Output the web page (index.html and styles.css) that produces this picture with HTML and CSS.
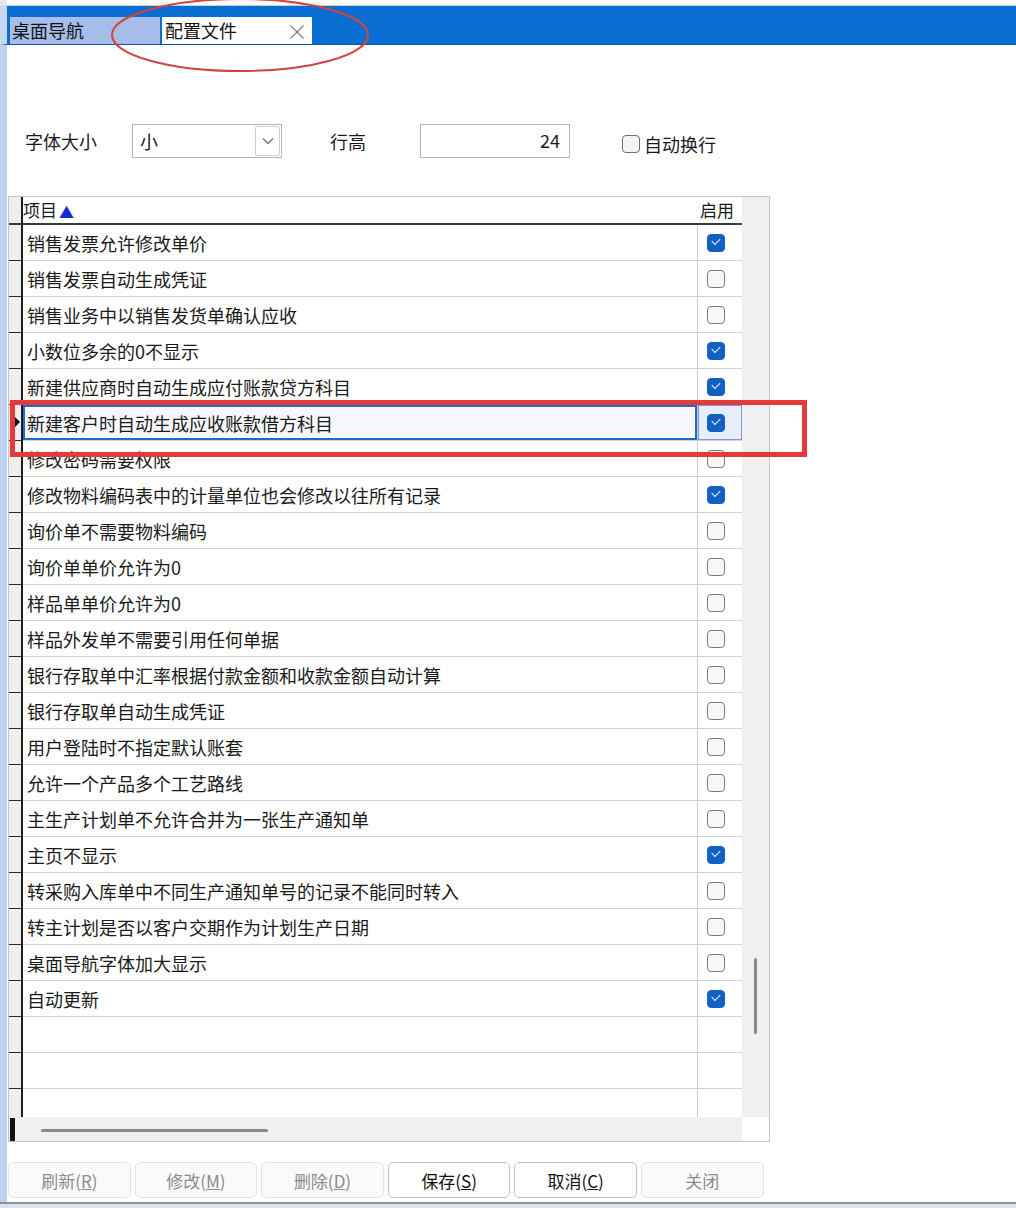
FILE: index.html
```html
<!DOCTYPE html>
<html>
<head>
<meta charset="utf-8">
<link rel="stylesheet" href="styles.css">
</head>
<body>
<div class="page">
  <div class="topline"></div>
  <div class="tabbar">
    <div class="tab tab-nav">桌面导航</div>
    <div class="tab tab-active"><span>配置文件</span><span class="close">×</span></div>
  </div>
  <div class="main">
    <div class="leftedge"></div>
    <div class="content">
      <div class="controls">
        <span class="label lbl-font">字体大小</span>
        <div class="select"><span class="select-val">小</span><span class="select-btn"><svg width="14" height="10" viewBox="0 0 14 10"><path d="M2 2.5 L7 7.5 L12 2.5" fill="none" stroke="#777" stroke-width="1.4"/></svg></span></div>
        <span class="label lbl-row">行高</span>
        <div class="numinput">24</div>
        <span class="chk-wrap"><span class="chkbox"></span><span class="label">自动换行</span></span>
      </div>
      <div class="grid">
        <div class="grid-left">
          <div class="row header">
            <div class="ind"></div>
            <div class="cell-name">项目<span class="sort">▲</span></div>
            <div class="cell-chk head-chk">启用</div>
          </div>
          <div class="gbody">
            <div class="row"><div class="ind"></div><div class="cell-name">销售发票允许修改单价</div><div class="cell-chk"><span class="cb on"></span></div></div>
            <div class="row"><div class="ind"></div><div class="cell-name">销售发票自动生成凭证</div><div class="cell-chk"><span class="cb"></span></div></div>
            <div class="row"><div class="ind"></div><div class="cell-name">销售业务中以销售发货单确认应收</div><div class="cell-chk"><span class="cb"></span></div></div>
            <div class="row"><div class="ind"></div><div class="cell-name">小数位多余的0不显示</div><div class="cell-chk"><span class="cb on"></span></div></div>
            <div class="row"><div class="ind"></div><div class="cell-name">新建供应商时自动生成应付账款贷方科目</div><div class="cell-chk"><span class="cb on"></span></div></div>
            <div class="row selected"><div class="ind"><span class="arrow"></span></div><div class="cell-name">新建客户时自动生成应收账款借方科目</div><div class="cell-chk"><span class="cb on"></span></div></div>
            <div class="row"><div class="ind"></div><div class="cell-name">修改密码需要权限</div><div class="cell-chk"><span class="cb"></span></div></div>
            <div class="row"><div class="ind"></div><div class="cell-name">修改物料编码表中的计量单位也会修改以往所有记录</div><div class="cell-chk"><span class="cb on"></span></div></div>
            <div class="row"><div class="ind"></div><div class="cell-name">询价单不需要物料编码</div><div class="cell-chk"><span class="cb"></span></div></div>
            <div class="row"><div class="ind"></div><div class="cell-name">询价单单价允许为0</div><div class="cell-chk"><span class="cb"></span></div></div>
            <div class="row"><div class="ind"></div><div class="cell-name">样品单单价允许为0</div><div class="cell-chk"><span class="cb"></span></div></div>
            <div class="row"><div class="ind"></div><div class="cell-name">样品外发单不需要引用任何单据</div><div class="cell-chk"><span class="cb"></span></div></div>
            <div class="row"><div class="ind"></div><div class="cell-name">银行存取单中汇率根据付款金额和收款金额自动计算</div><div class="cell-chk"><span class="cb"></span></div></div>
            <div class="row"><div class="ind"></div><div class="cell-name">银行存取单自动生成凭证</div><div class="cell-chk"><span class="cb"></span></div></div>
            <div class="row"><div class="ind"></div><div class="cell-name">用户登陆时不指定默认账套</div><div class="cell-chk"><span class="cb"></span></div></div>
            <div class="row"><div class="ind"></div><div class="cell-name">允许一个产品多个工艺路线</div><div class="cell-chk"><span class="cb"></span></div></div>
            <div class="row"><div class="ind"></div><div class="cell-name">主生产计划单不允许合并为一张生产通知单</div><div class="cell-chk"><span class="cb"></span></div></div>
            <div class="row"><div class="ind"></div><div class="cell-name">主页不显示</div><div class="cell-chk"><span class="cb on"></span></div></div>
            <div class="row"><div class="ind"></div><div class="cell-name">转采购入库单中不同生产通知单号的记录不能同时转入</div><div class="cell-chk"><span class="cb"></span></div></div>
            <div class="row"><div class="ind"></div><div class="cell-name">转主计划是否以客户交期作为计划生产日期</div><div class="cell-chk"><span class="cb"></span></div></div>
            <div class="row"><div class="ind"></div><div class="cell-name">桌面导航字体加大显示</div><div class="cell-chk"><span class="cb"></span></div></div>
            <div class="row"><div class="ind"></div><div class="cell-name">自动更新</div><div class="cell-chk"><span class="cb on"></span></div></div>
            <div class="row"><div class="ind"></div><div class="cell-name"></div><div class="cell-chk"></div></div>
            <div class="row"><div class="ind"></div><div class="cell-name"></div><div class="cell-chk"></div></div>
            <div class="row"><div class="ind"></div><div class="cell-name"></div><div class="cell-chk"></div></div>
          </div>
          <div class="hscroll"><span class="hblock"></span><span class="hthumb"></span></div>
        </div>
        <div class="grid-right">
          <div class="vscroll"><span class="vthumb"></span></div>
          <div class="corner"></div>
        </div>
      </div>
      <div class="buttons">
        <div class="btn disabled">刷新(<u>R</u>)</div>
        <div class="btn disabled">修改(<u>M</u>)</div>
        <div class="btn disabled">删除(<u>D</u>)</div>
        <div class="btn">保存(<u>S</u>)</div>
        <div class="btn">取消(<u>C</u>)</div>
        <div class="btn disabled">关闭</div>
      </div>
    </div>
  </div>
  <div class="bottomline"></div>
  <svg class="ellipse" width="280" height="90" viewBox="0 0 280 90"><ellipse cx="130" cy="37" rx="128" ry="36" fill="none" stroke="#d0463f" stroke-width="2"/></svg>
  <div class="redbox"></div>
</div>
</body>
</html>
```
FILE: styles.css
```css
* { box-sizing: border-box; }
html, body { margin: 0; padding: 0; }
body {
  width: 1016px;
  height: 1208px;
  overflow: hidden;
  background: #fff;
  font-family: "Noto Sans CJK SC", "Noto Sans", sans-serif;
  color: #1a1a1a;
}
.page {
  position: relative;
  width: 1016px;
  height: 1208px;
  display: flex;
  flex-direction: column;
}
.topline {
  height: 6px;
  background: #fff;
  border-bottom: 1px solid #cfcfcf;
  border-left: 7px solid #e4e8ee;
}
.tabbar {
  height: 39px;
  background: #0a6dd2;
  border-left: 7px solid #c5d6ee;
  border-bottom: 1px solid #0a55a8;
  display: flex;
  align-items: flex-end;
  padding-left: 3px;
}
.tab {
  height: 27px;
  width: 150px;
  font-size: 18px;
  line-height: 27px;
  padding-left: 2px;
  color: #111;
}
.tab-nav { background: #a7bde9; }
.tab-active {
  background: #fff;
  margin-left: 2px;
  display: flex;
  justify-content: space-between;
  padding-left: 3px;
  padding-right: 4px;
}
.close { color: #777; font-size: 22px; font-weight: 300; line-height: 26px; }
.main {
  flex: 1;
  display: flex;
}
.leftedge {
  width: 7px;
  background: #bcd2ef;
}
.content {
  padding-left: 1px;
  display: flex;
  flex-direction: column;
}
.controls {
  margin-top: 79px;
  height: 34px;
  display: flex;
  align-items: center;
}
.label { font-size: 18px; color: #1a1a1a; }
.lbl-font { margin-left: 17px; width: 107px; }
.select {
  width: 150px;
  height: 34px;
  border: 1px solid #b4b4b4;
  display: flex;
  align-items: center;
  justify-content: space-between;
  padding-left: 7px;
  padding-right: 1px;
}
.select-val { font-size: 18px; }
.select-btn {
  width: 25px;
  height: 30px;
  border: 1px solid #cfcfcf;
  border-radius: 2px;
  display: flex;
  align-items: center;
  justify-content: center;
}
.lbl-row { margin-left: 48px; width: 90px; }
.numinput {
  width: 150px;
  height: 34px;
  border: 1px solid #b4b4b4;
  font-size: 18px;
  text-align: right;
  padding-right: 9px;
  line-height: 31px;
}
.chk-wrap { margin-left: 52px; display: flex; align-items: center; margin-top: 6px; }
.chkbox {
  width: 18px;
  height: 18px;
  border: 1.5px solid #6e6e6e;
  border-radius: 4px;
  background: #f3f3f3;
  margin-right: 4px;
}
.grid {
  margin-top: 38px;
  width: 762px;
  height: 946px;
  border: 1px solid #c4c4c4;
  display: flex;
}
.grid-left {
  width: 733px;
  display: flex;
  flex-direction: column;
}
.row {
  display: flex;
  height: 36px;
  flex-shrink: 0;
}
.ind {
  width: 14px;
  background: #efefef;
  border-right: 2px solid #1e1e1e;
  border-bottom: 1px solid #2a2a2a;
  position: relative;
}
.cell-name {
  width: 675px;
  border-right: 1px solid #c8c8c8;
  border-bottom: 1px solid #d2d2d2;
  font-size: 18px;
  display: flex;
  align-items: center;
  padding-left: 4px;
  white-space: nowrap;
  overflow: hidden;
}
.cell-chk {
  width: 44px;
  border-bottom: 1px solid #d2d2d2;
  display: flex;
  align-items: center;
  padding-left: 9px;
}
.header { height: 28px; }
.header .ind { border-bottom: 2px solid #3a3a3a; }
.header .cell-name {
  border-right: none;
  border-bottom: 2px solid #3a3a3a;
  font-size: 17px;
  padding-left: 0;
  align-items: flex-end;
  padding-bottom: 1px;
}
.sort { color: #1428d8; font-size: 15px; margin-left: 2px; }
.head-chk {
  border-bottom: 2px solid #3a3a3a;
  font-size: 17px;
  justify-content: flex-end;
  align-items: flex-end;
  padding-left: 0;
  padding-right: 8px;
  padding-bottom: 1px;
}
.gbody {
  height: 892px;
  overflow: hidden;
}
.cb {
  width: 18px;
  height: 18px;
  border: 1.5px solid #7a7a7a;
  border-radius: 4px;
  background: #f7f7f7;
  position: relative;
}
.cb.on {
  background: #1260c2;
  border-color: #1260c2;
}
.cb.on::after {
  content: "";
  position: absolute;
  left: 4px;
  top: 3px;
  width: 7px;
  height: 4px;
  border-left: 1.5px solid #fff;
  border-bottom: 1.5px solid #fff;
  transform: rotate(-45deg);
}
.selected .cell-name {
  background: #f6f8fd;
  box-shadow: inset 0 0 0 2px #2069c8;
}
.selected .cell-chk {
  background: #e8edf9;
  box-shadow: inset 0 0 0 1px #7d97cf;
}
.arrow {
  position: absolute;
  left: 6px;
  top: 12px;
  width: 0;
  height: 0;
  border-top: 5px solid transparent;
  border-bottom: 5px solid transparent;
  border-left: 5px solid #111;
}
.hscroll {
  height: 24px;
  background: #f0f0f0;
  display: flex;
  align-items: center;
  flex-shrink: 0;
}
.hblock {
  width: 5px;
  height: 23px;
  background: #111;
  margin-left: 1px;
}
.hthumb {
  width: 227px;
  height: 3px;
  border-radius: 2px;
  background: #8a8a8a;
  margin-left: 26px;
  margin-top: 2px;
}
.grid-right {
  width: 27px;
  display: flex;
  flex-direction: column;
}
.vscroll {
  height: 920px;
  background: #f0f0f0;
  position: relative;
}
.vthumb {
  position: absolute;
  left: 12px;
  top: 761px;
  width: 3px;
  height: 76px;
  border-radius: 2px;
  background: #8a8a8a;
}
.corner { flex: 1; background: #fff; }
.buttons {
  margin-top: 20px;
  display: flex;
  gap: 4px;
}
.btn {
  width: 122.6px;
  height: 36px;
  border: 1px solid #dcdcdc;
  border-radius: 5px;
  background: #fafafa;
  font-size: 17px;
  display: flex;
  align-items: center;
  justify-content: center;
  color: #111;
}
.btn.disabled { color: #8c8c8c; border-color: #e2e2e2; }
.btn:not(.disabled) { border-color: #c2c2c2; background: #fff; }
.bottomline {
  height: 6px;
  border-top: 2px solid #8d9299;
  background: #d9e2ec;
}
.ellipse {
  position: absolute;
  left: 110px;
  top: -2px;
}
.redbox {
  position: absolute;
  left: 10px;
  top: 400px;
  width: 797px;
  height: 57px;
  border: 5px solid #e53a3a;
}
```
